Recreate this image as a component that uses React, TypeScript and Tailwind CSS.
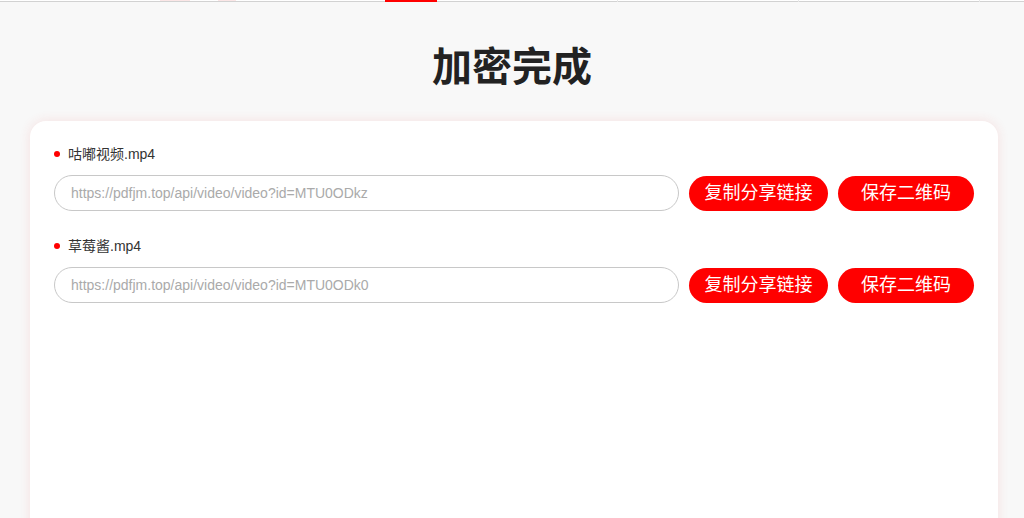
import React from 'react';

// ─── Data ─────────────────────────────────────────────────────────────────────

const FILES = [
  { name: '咕嘟视频.mp4', url: 'https://pdfjm.top/api/video/video?id=MTU0ODkz' },
  { name: '草莓酱.mp4', url: 'https://pdfjm.top/api/video/video?id=MTU0ODk0' },
];

const FONT = 'font-["Liberation_Sans","Noto_Sans_CJK_SC",sans-serif]';

// ─── FileRow ──────────────────────────────────────────────────────────────────

function FileRow({ name, url }: { name: string; url: string }) {
  return (
    <div className="flex flex-col">
      {/* Name */}
      <div className="flex h-5 items-center gap-[8px]">
        <span className="h-[6px] w-[6px] shrink-0 rounded-full bg-[#ff0000]" />
        <span className="text-[14px] leading-5 text-[#333]">{name}</span>
      </div>

      {/* Link + actions */}
      <div className="mt-[11px] flex items-center gap-[10px]">
        <input
          type="text"
          readOnly
          placeholder={url}
          className="h-[36px] flex-1 rounded-full border border-[#c8c8c8] bg-white px-4 text-[14px] text-[#333] outline-none placeholder:text-[#aaa]"
        />
        <button className="h-[35px] w-[139px] shrink-0 rounded-full bg-[#ff0000] text-[18px] leading-none text-white">
          复制分享链接
        </button>
        <button className="h-[35px] w-[136px] shrink-0 rounded-full bg-[#ff0000] text-[18px] leading-none text-white">
          保存二维码
        </button>
      </div>
    </div>
  );
}

// ─── App ──────────────────────────────────────────────────────────────────────

export default function App() {
  return (
    <div className={`min-h-screen overflow-hidden bg-[#f8f8f8] ${FONT}`}>
      {/* Header (scrolled off, only its bottom edge shows) */}
      <div className="relative h-[2px] border-b border-[#d2d2d2] bg-white">
        <span className="absolute left-[385px] top-0 h-[2px] w-[52px] bg-[#ff0000]" />
        <span className="absolute left-[160px] top-0 h-[1px] w-[30px] bg-[#fbe6e6]" />
        <span className="absolute left-[218px] top-0 h-[1px] w-[18px] bg-[#fbe6e6]" />
        <span className="absolute left-[617px] top-0 h-[2px] w-px bg-[#e8e8e8]" />
        <span className="absolute left-[798px] top-0 h-[2px] w-px bg-[#e8e8e8]" />
        <span className="absolute left-[979px] top-0 h-[2px] w-px bg-[#e8e8e8]" />
      </div>

      {/* Title */}
      <h1 className="mt-[45px] text-center text-[40px] font-bold leading-[40px] text-[#222]">加密完成</h1>

      {/* Result card */}
      <div className="ml-[30px] mt-[34px] min-h-[420px] w-[968px] rounded-2xl bg-white px-6 pt-[23px] shadow-[0_0_12px_rgba(230,60,60,0.12)]">
        <div className="flex flex-col gap-[25px]">
          {FILES.map((f) => (
            <FileRow key={f.name} name={f.name} url={f.url} />
          ))}
        </div>
      </div>
    </div>
  );
}
